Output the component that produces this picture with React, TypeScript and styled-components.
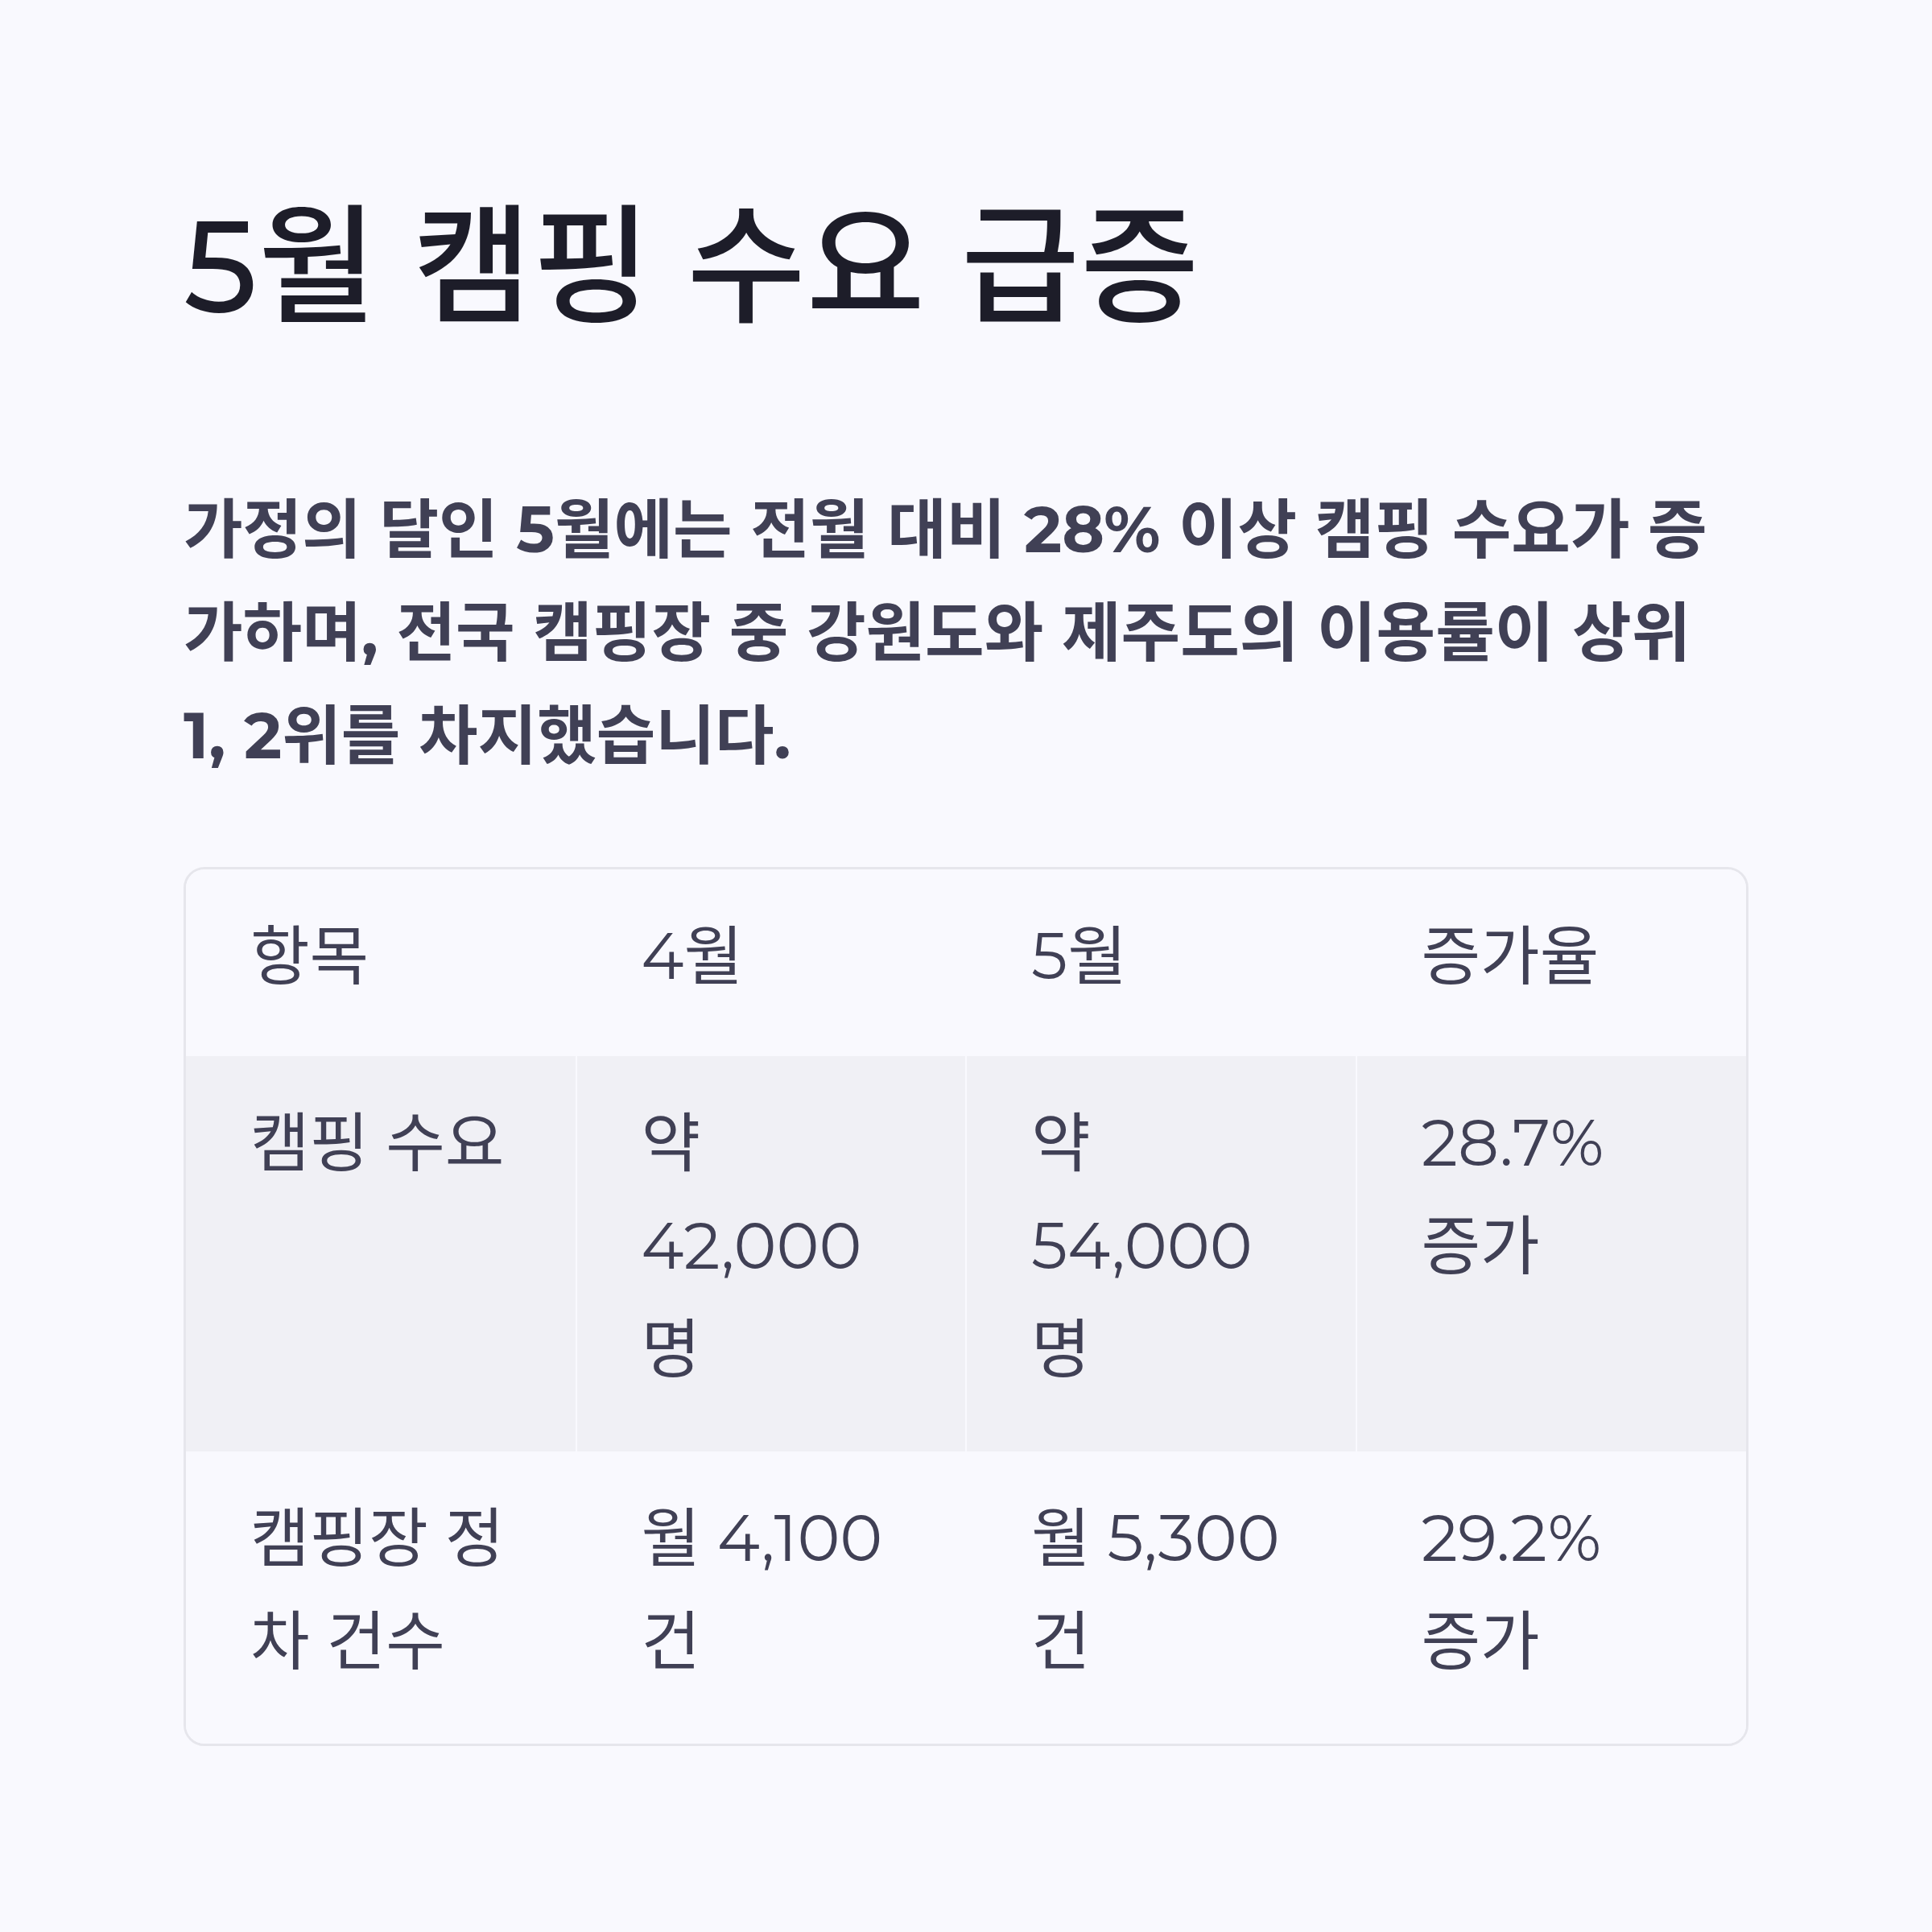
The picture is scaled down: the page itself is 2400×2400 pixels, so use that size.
import React from "react";
import styled, { createGlobalStyle } from "styled-components";

const FONT = `"Montserrat", "Noto Sans CJK KR", sans-serif`;

const GlobalStyle = createGlobalStyle`
  html, body {
    margin: 0;
    padding: 0;
    background: #f9f9fe;
  }
  body {
    font-family: ${FONT};
  }
`;

const Page = styled.main`
  width: 2400px;
  min-height: 2400px;
  box-sizing: border-box;
  padding: 235px 228px 0 228px;
  display: flex;
  flex-direction: column;
  background: #f9f9fe;
`;

const Title = styled.h1`
  margin: 0;
  font-family: ${FONT};
  font-size: 160px;
  font-weight: 500;
  line-height: 1.2;
  letter-spacing: 1px;
  color: #1d1d29;
`;

const Lead = styled.p`
  margin: 167px 0 0 0;
  font-family: ${FONT};
  font-size: 80px;
  font-weight: 700;
  line-height: 1.6;
  color: #404055;
`;

const Card = styled.div`
  margin-top: 99px;
  border: 3px solid #e6e6ec;
  border-radius: 26px;
  overflow: hidden;
  background: #f9f9fe;
`;

const Table = styled.table`
  width: 100%;
  border-collapse: collapse;
  table-layout: fixed;
`;

const Row = styled.tr<{ $shaded?: boolean }>`
  background: ${(p) => (p.$shaded ? "#f0f0f5" : "#f9f9fe")};
`;

const Cell = styled.td`
  padding: 44px 88px 63px 80px;
  vertical-align: top;
  text-align: left;
  font-family: ${FONT};
  font-size: 80px;
  font-weight: 400;
  line-height: 1.6;
  color: #404055;
  border-left: 2px solid #f9f9fe;
  &:first-child {
    border-left: none;
  }
`;

const HeadCell = styled(Cell).attrs({ as: "th" })`
  font-weight: 400;
  padding-bottom: 60px;
`;

const header = ["항목", "4월", "5월", "증가율"];

const rows = [
  ["캠핑 수요", "약 42,000 명", "약 54,000 명", "28.7% 증가"],
  ["캠핑장 정차 건수", "월 4,100 건", "월 5,300 건", "29.2% 증가"],
];

export default function App() {
  return (
    <>
      <GlobalStyle />
      <Page>
        <Title>5월 캠핑 수요 급증</Title>
        <Lead>
          가정의 달인 5월에는 전월 대비 28% 이상 캠핑 수요가 증가하며, 전국
          캠핑장 중 강원도와 제주도의 이용률이 상위 1, 2위를 차지했습니다.
        </Lead>
        <Card>
          <Table>
            <thead>
              <Row>
                {header.map((h) => (
                  <HeadCell key={h}>{h}</HeadCell>
                ))}
              </Row>
            </thead>
            <tbody>
              {rows.map((r, i) => (
                <Row key={i} $shaded={i % 2 === 0}>
                  {r.map((c, j) => (
                    <Cell key={j}>{c}</Cell>
                  ))}
                </Row>
              ))}
            </tbody>
          </Table>
        </Card>
      </Page>
    </>
  );
}
